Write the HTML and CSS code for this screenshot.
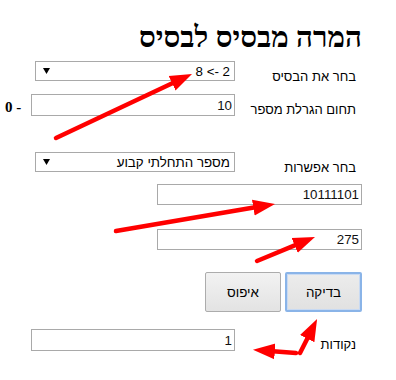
FILE: index.html
```html
<!DOCTYPE html>
<html lang="he" dir="rtl">
<head>
<meta charset="utf-8">
<link rel="stylesheet" href="styles.css">
</head>
<body>
<div class="page">
  <h1 class="title">המרה מבסיס לבסיס</h1>

  <div class="row row-base">
    <label class="lbl">בחר את הבסיס</label>
    <select class="sel"><option>2 -&gt; 8</option></select>
  </div>

  <div class="row row-range">
    <label class="lbl">תחום הגרלת מספר</label>
    <input class="inp inp-wide" type="text" value="10">
    <span class="range-min" dir="ltr">0 -</span>
  </div>

  <div class="row row-opt">
    <label class="lbl">בחר אפשרות</label>
    <select class="sel"><option>מספר התחלתי קבוע</option></select>
  </div>

  <input class="inp inp-right inp-bin" type="text" value="10111101">
  <input class="inp inp-right inp-dec" type="text" value="275">

  <div class="buttons">
    <button class="btn btn-focus" type="button">בדיקה</button>
    <button class="btn" type="button">איפוס</button>
  </div>

  <div class="row row-score">
    <label class="lbl">נקודות</label>
    <input class="inp inp-wide" type="text" value="1">
  </div>
</div>

<svg class="arrows" width="396" height="380" viewBox="0 0 396 380" xmlns="http://www.w3.org/2000/svg">
  <defs>
    <marker id="head" markerUnits="userSpaceOnUse" markerWidth="24" markerHeight="20" refX="2" refY="10" orient="auto">
      <path d="M0,2 L22,10 L0,18 z" fill="#f00"/>
    </marker>
  </defs>
  <g stroke="#f00" stroke-width="4.5" stroke-linecap="round" fill="none" marker-end="url(#head)">
    <line x1="56" y1="138" x2="173.9" y2="82.5"/>
    <line x1="116" y1="231" x2="255.3" y2="207.3"/>
    <line x1="257" y1="261" x2="296.5" y2="244.6"/>
    <line x1="300" y1="353" x2="308.1" y2="336.9"/>
    <line x1="296" y1="353" x2="272.9" y2="351.2"/>
  </g>
</svg>
</body>
</html>
```

FILE: styles.css
```css
html, body {
  margin: 0;
  padding: 0;
  background: #fff;
}

body {
  direction: rtl;
  font-family: "Liberation Sans", Arial, sans-serif;
  color: #000;
  width: 396px;
  height: 380px;
  position: relative;
  overflow: hidden;
}

.page {
  margin: 0 34px 0 0;
  padding-left: 5px;
}

.title {
  margin: 20px 0 0 0;
  font-family: "Liberation Serif", "Times New Roman", serif;
  font-size: 29.5px;
  font-weight: bold;
  line-height: 35px;
}

.row {
  display: flex;
  align-items: flex-start;
}

.lbl {
  width: 121px;
  padding-right: 6px;
  padding-top: 8px;
  font-size: 13px;
  line-height: 15px;
  white-space: nowrap;
  flex: none;
}

.row-base { margin-top: 6px; }
.row-range { margin-top: 10px; }
.row-opt { margin-top: 35px; }
.row-score { margin-top: 17px; }

.sel {
  -webkit-appearance: none;
  appearance: none;
  width: 200px;
  height: 20px;
  box-sizing: border-box;
  margin: 0;
  border: 1px solid #a9a9a9;
  border-radius: 0;
  background: #fff url("data:image/svg+xml,%3Csvg xmlns='http://www.w3.org/2000/svg' width='8' height='6'%3E%3Cpath d='M0,0 L7,0 L3.5,6 z' fill='%23000'/%3E%3C/svg%3E") no-repeat 7px 6px;
  font-family: "Liberation Sans", Arial, sans-serif;
  font-size: 13.33px;
  color: #000;
  padding: 0 4px 0 20px;
  direction: rtl;
}

.inp {
  display: block;
  box-sizing: border-box;
  margin: 0;
  height: 22px;
  border: 1px solid #a9a9a9;
  border-radius: 0;
  padding: 0 2px;
  font-family: "Liberation Sans", Arial, sans-serif;
  font-size: 13.33px;
  color: #111;
  background: #fff;
  direction: rtl;
  text-align: right;
}

.inp-wide {
  width: 204px;
}

.range-min {
  margin-right: 10px;
  padding-top: 5px;
  font-family: "Liberation Serif", "Times New Roman", serif;
  font-size: 15px;
  font-weight: bold;
  line-height: 17px;
}

.inp-right {
  width: 205px;
  height: 21px;
}

.inp-bin { margin-top: 9px; }
.inp-dec { margin-top: 24px; }

.buttons {
  display: flex;
  gap: 4px;
  margin-top: 22px;
  margin-left: -1px;
}

.btn {
  width: 76px;
  height: 40px;
  margin: 0;
  box-sizing: border-box;
  border: 1px solid #acacac;
  border-radius: 2px;
  background: linear-gradient(#f2f2f2, #e3e3e3);
  font-family: "Liberation Sans", Arial, sans-serif;
  font-size: 13.33px;
  color: #000;
  padding: 0;
}

.btn-focus {
  width: 77px;
  border: 2px solid #8ab4e8;
  box-shadow: inset 0 0 0 1px #c8daf3;
  background: linear-gradient(#ececec, #e1e1e1);
}

.arrows {
  position: absolute;
  left: 0;
  top: 0;
  pointer-events: none;
}
```
